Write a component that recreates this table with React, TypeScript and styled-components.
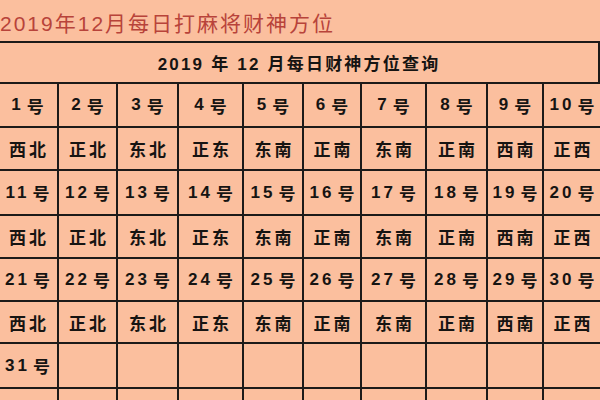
import React from 'react';
import styled, { createGlobalStyle } from 'styled-components';

const GlobalStyle = createGlobalStyle`
  html, body {
    margin: 0;
    padding: 0;
    width: 600px;
    height: 400px;
    overflow: hidden;
    background: #fbbf9e;
  }
`;

const Page = styled.div`
  width: 600px;
  height: 400px;
  overflow: hidden;
  background: #fbbf9e;
  font-family: 'Liberation Sans', 'Noto Sans CJK SC', sans-serif;
`;

const Heading = styled.h1`
  margin: 0;
  height: 41px;
  padding-top: 3px;
  box-sizing: border-box;
  display: flex;
  align-items: center;
  font-size: 21px;
  font-weight: 400;
  letter-spacing: 2px;
  color: #b8433a;
  white-space: nowrap;
`;

const COL_WIDTHS = [59, 57, 59, 63, 58, 56, 63, 59, 54, 56];
const ROW_HEIGHTS = [39, 42, 41, 43, 41, 41, 40, 43, 42];

const Grid = styled.div`
  display: grid;
  grid-template-columns: ${COL_WIDTHS.map((w) => `${w}px`).join(' ')};
  grid-template-rows: ${ROW_HEIGHTS.map((h) => `${h}px`).join(' ')};
  gap: 2px;
  padding: 2px;
  margin-left: -4px;
  width: max-content;
  background: #1c1a19;
`;

const TitleCell = styled.div`
  grid-column: 1 / -1;
  display: flex;
  align-items: center;
  justify-content: center;
  background: #fbbf9e;
  box-shadow: inset -2px 0 0 #1c1a19;
  font-size: 17px;
  font-weight: 700;
  letter-spacing: 2.2px;
  color: #161412;
  white-space: nowrap;
`;

const Cell = styled.div`
  display: flex;
  align-items: center;
  justify-content: center;
  background: #fbbf9e;
  font-size: 17px;
  font-weight: 700;
  letter-spacing: 3px;
  color: #161412;
  white-space: nowrap;
  padding-left: 3px;
`;

const Suffix = styled.span`
  margin-left: 3px;
`;

const DIRECTIONS = ['西北', '正北', '东北', '正东', '东南', '正南', '东南', '正南', '西南', '正西'];

type CellData = { day?: number; text?: string };

export default function App() {
  const rows: CellData[][] = [];
  for (let r = 0; r < 3; r++) {
    rows.push(COL_WIDTHS.map((_, i) => ({ day: r * 10 + i + 1 })));
    rows.push(DIRECTIONS.map((text) => ({ text })));
  }
  rows.push(COL_WIDTHS.map((_, i) => (i === 0 ? { day: 31 } : {})));
  rows.push(COL_WIDTHS.map(() => ({})));

  return (
    <Page>
      <GlobalStyle />
      <Heading>2019年12月每日打麻将财神方位</Heading>
      <Grid>
        <TitleCell>2019 年 12 月每日财神方位查询</TitleCell>
        {rows.map((row, r) =>
          row.map((cell, c) => (
            <Cell key={`${r}-${c}`}>
              {cell.day !== undefined ? (
                <>
                  {cell.day}
                  <Suffix>号</Suffix>
                </>
              ) : (
                cell.text
              )}
            </Cell>
          )),
        )}
      </Grid>
    </Page>
  );
}
